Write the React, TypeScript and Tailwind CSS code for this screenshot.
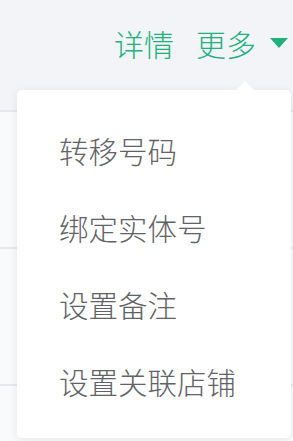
import React from 'react';

const items = ['转移号码', '绑定实体号', '设置备注', '设置关联店铺'];

export default function App() {
	return (
		<div
			className="relative w-[293px] h-[441px] overflow-hidden bg-[#f3f4f8] font-light"
			style={{ fontFamily: '"Noto Sans CJK SC", "Noto Sans", sans-serif' }}
		>
			{/* header actions */}
			<div className="flex h-[110px] items-start justify-end pr-[5px] pt-[24px] text-[30px] leading-[38px] text-[#21b07c]">
				<span>详情</span>
				<span className="ml-[22px]">更多</span>
				<span className="ml-[14px] mt-[14px] h-0 w-0 border-x-[9px] border-t-[10px] border-x-transparent border-t-[#21b07c]" />
			</div>

			{/* table rows behind the dropdown */}
			<div className="flex flex-col bg-[#f9fafc]">
				<div className="h-[137px] border-t-2 border-[#e6e8ee]" />
				<div className="h-[137px] border-t-2 border-[#e6e8ee]" />
				<div className="h-[137px] border-t-2 border-[#e6e8ee]" />
			</div>

			{/* dropdown menu */}
			<div className="absolute left-[17px] top-[90px] w-[274px] h-[348px] rounded-[5px] bg-white shadow-[0_2px_10px_rgba(0,0,0,0.08)]">
				<span className="absolute -top-[9px] left-[219px] h-0 w-0 border-x-[9px] border-b-[9px] border-x-transparent border-b-white" />
				<ul className="flex flex-col pt-[22px] pl-[42px]">
					{items.map((t) => (
						<li key={t} className="flex h-[77px] items-center text-[29.5px] text-[#5f6266]">
							{t}
						</li>
					))}
				</ul>
			</div>
		</div>
	);
}
